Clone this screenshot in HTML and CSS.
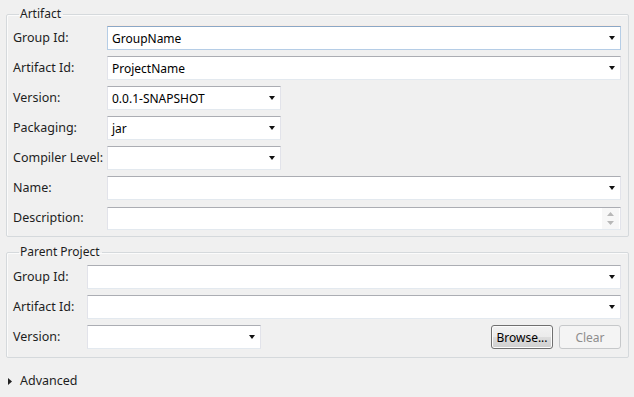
FILE: index.html
```html
<!DOCTYPE html>
<html lang="en">
<head>
    <meta charset="UTF-8">
    <title>New Maven Project</title>
    <link rel="stylesheet" href="styles.css">
</head>
<body>
    <div id="wizard">
        <fieldset class="group artifact">
            <legend>Artifact</legend>
            <div class="form-grid">
                <label>Group Id:</label>
                <div class="combo focused"><span>GroupName</span><i class="arrow"></i></div>

                <label>Artifact Id:</label>
                <div class="combo"><span>ProjectName</span><i class="arrow"></i></div>

                <label>Version:</label>
                <div class="combo short"><span>0.0.1-SNAPSHOT</span><i class="arrow"></i></div>

                <label>Packaging:</label>
                <div class="combo short"><span>jar</span><i class="arrow"></i></div>

                <label>Compiler Level:</label>
                <div class="combo short"><span></span><i class="arrow"></i></div>

                <label>Name:</label>
                <div class="combo"><span></span><i class="arrow"></i></div>

                <label>Description:</label>
                <div class="combo desc">
                    <span></span>
                    <div class="spinner">
                        <svg width="7" height="4" viewBox="0 0 7 4"><path d="M0 4 L3.5 0 L7 4 Z" fill="#b8b8b8"/></svg>
                        <svg width="7" height="4" viewBox="0 0 7 4"><path d="M0 0 L3.5 4 L7 0 Z" fill="#b8b8b8"/></svg>
                    </div>
                </div>
            </div>
        </fieldset>

        <fieldset class="group parent">
            <legend>Parent Project</legend>
            <div class="form-grid">
                <label>Group Id:</label>
                <div class="combo"><span></span><i class="arrow"></i></div>

                <label>Artifact Id:</label>
                <div class="combo"><span></span><i class="arrow"></i></div>

                <label>Version:</label>
                <div class="version-row">
                    <div class="combo short"><span></span><i class="arrow"></i></div>
                    <div class="buttons">
                        <button class="btn">Browse...</button>
                        <button class="btn" disabled>Clear</button>
                    </div>
                </div>
            </div>
        </fieldset>

        <div class="advanced">
            <svg width="4" height="7" viewBox="0 0 4 7"><path d="M0 0 L4 3.5 L0 7 Z" fill="#222"/></svg>
            <span>Advanced</span>
        </div>
    </div>
</body>
</html>
```

FILE: styles.css
```css
body, html {
    margin: 0;
    padding: 0;
    background-color: #f0f0f0;
    font-family: "Noto Sans", "Liberation Sans", sans-serif;
    font-size: 12px;
    color: #1e1e1e;
    overflow: hidden;
}
#wizard {
    width: 634px;
    height: 397px;
}
.group {
    margin: 6px 5px 0 6px;
    padding: 4px 7px 6px 6px;
    border: 1px solid #d5d9dc;
    border-radius: 2px;
    box-shadow: inset 1px 1px 0 #fbfbfb;
}
.group legend {
    padding: 0 2px 0 1px;
    margin-left: 6px;
    line-height: 16px;
    color: #1e1e1e;
}
.parent {
    margin-top: 7px;
    padding-top: 5px;
    padding-bottom: 8px;
}
.form-grid {
    display: grid;
    grid-template-columns: 94px 1fr;
    row-gap: 6px;
    align-items: center;
}
.parent .form-grid {
    grid-template-columns: 74px 1fr;
}
.form-grid label {
    line-height: 24px;
    font-size: 12.5px;
    white-space: nowrap;
}
.combo {
    display: flex;
    align-items: center;
    height: 24px;
    box-sizing: border-box;
    padding: 0 5px 0 4px;
    background-color: #fff;
    border: 1px solid;
    border-color: #abadb3 #e2e3ea #e3e9ef #e2e3ea;
}
.combo span {
    flex: 1;
    color: #000;
}
.combo.short {
    width: 174px;
}
.combo.focused {
    border-color: #8aa7c6 #b5cde6 #b5cde6 #b5cde6;
    box-shadow: 0 -1px 0 #f6ebe4;
}
.combo.desc {
    height: 23px;
    padding-right: 1px;
}
.arrow {
    width: 0;
    height: 0;
    border-left: 3.5px solid transparent;
    border-right: 3.5px solid transparent;
    border-top: 4px solid #111;
}
.spinner {
    display: flex;
    flex-direction: column;
    align-items: center;
    justify-content: center;
    gap: 5px;
    width: 17px;
    height: 21px;
    background-color: #f7f7f7;
}
.spinner svg {
    display: block;
}
.version-row {
    display: flex;
    align-items: center;
    justify-content: space-between;
}
.buttons {
    display: flex;
    gap: 6px;
}
.btn {
    width: 62px;
    height: 24px;
    padding: 0;
    font-family: inherit;
    font-size: 12px;
    color: #000;
    border: 1px solid #707070;
    border-radius: 3px;
    background: linear-gradient(#f2f2f2 0%, #ebebeb 50%, #dddddd 51%, #cfcfcf 100%);
    box-shadow: inset 0 0 0 1px #fcfcfc;
}
.btn:disabled {
    color: #8d8d8d;
    border-color: #c6c8ca;
    background: #f4f4f4;
    box-shadow: none;
}
.advanced {
    display: flex;
    align-items: center;
    gap: 8px;
    margin: 15px 0 0 8px;
    line-height: 16px;
    font-size: 12.5px;
}
.advanced svg {
    display: block;
}
```
